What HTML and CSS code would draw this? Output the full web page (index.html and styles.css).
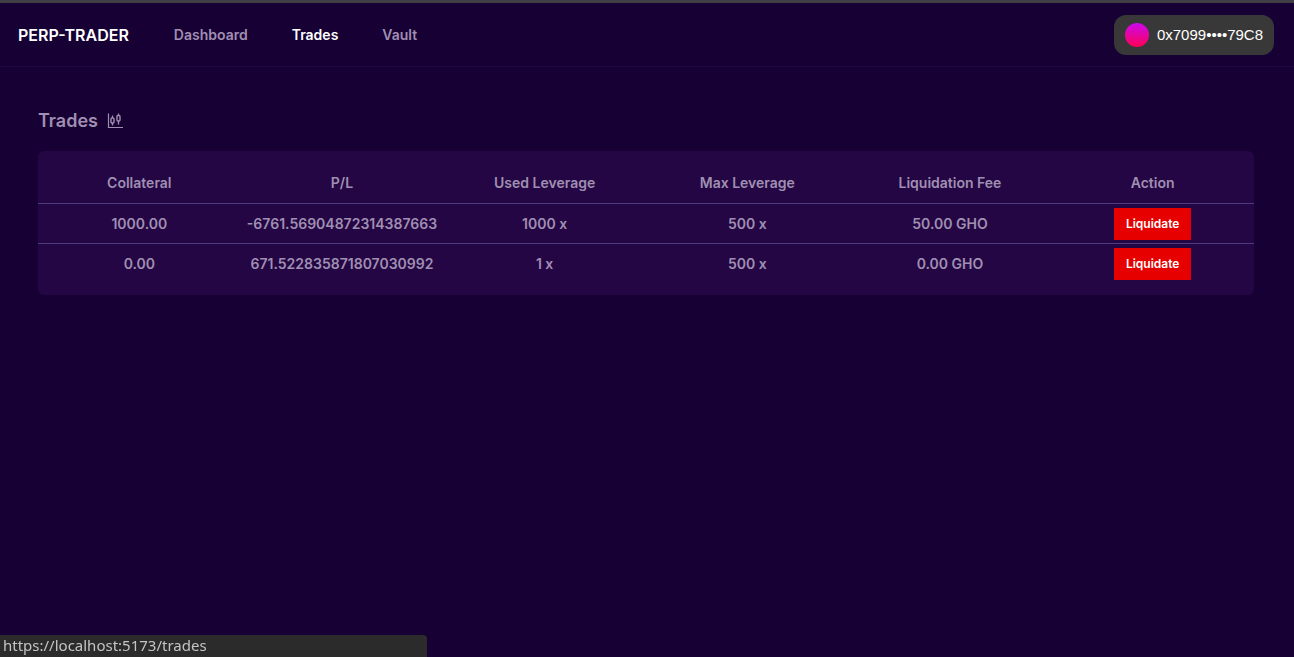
FILE: index.html
```html
<!DOCTYPE html>
<html lang="en">
<head>
<meta charset="utf-8">
<title>Perp-Trader</title>
<link rel="stylesheet" href="styles.css">
</head>
<body>
<header class="topbar">
  <a class="brand" href="#">PERP-TRADER</a>
  <nav class="nav">
    <a class="nav-link" href="#dashboard">Dashboard</a>
    <a class="nav-link active" href="#trades">Trades</a>
    <a class="nav-link" href="#vault">Vault</a>
  </nav>
  <button class="wallet" type="button"><span class="avatar"></span>0x7099••••79C8</button>
</header>
<main class="content">
  <h1 class="title">Trades
    <svg class="title-icon" viewBox="0 0 16 16" fill="none" stroke="currentColor" aria-hidden="true">
      <path d="M1.5 0.5V14.5H16" stroke-width="1.2"/>
      <path d="M5.5 2.5V5M5.5 10V12.5M11.5 0.5V3M11.5 8V11.5" stroke-width="1.3"/>
      <rect x="4" y="5" width="3" height="5" rx="1" stroke-width="1.4"/>
      <rect x="10" y="2.5" width="3" height="5.5" rx="1" stroke-width="1.4"/>
    </svg>
  </h1>
  <section class="panel">
    <table class="trades">
      <thead>
        <tr><th>Collateral</th><th>P/L</th><th>Used Leverage</th><th>Max Leverage</th><th>Liquidation Fee</th><th>Action</th></tr>
      </thead>
      <tbody>
        <tr><td>1000.00</td><td>-6761.56904872314387663</td><td>1000 x</td><td>500 x</td><td>50.00 GHO</td><td><button class="liquidate" type="button">Liquidate</button></td></tr>
        <tr><td>0.00</td><td>671.522835871807030992</td><td>1 x</td><td>500 x</td><td>0.00 GHO</td><td><button class="liquidate" type="button">Liquidate</button></td></tr>
      </tbody>
    </table>
  </section>
</main>
<div class="status">https://localhost:5173/trades</div>
</body>
</html>
```
FILE: styles.css
```css
* {
  box-sizing: border-box;
}

body {
  margin: 0;
  min-height: 100vh;
  border-top: 3px solid #413d44;
  background: #170033;
  color: #a08fb2;
  font-family: Inter, sans-serif;
  font-size: 14px;
  font-weight: 600;
}

a {
  color: inherit;
  text-decoration: none;
}

.topbar {
  display: flex;
  align-items: center;
  height: 64px;
  padding: 0 20px 0 18px;
  border-bottom: 1px solid #1f0a3f;
}

.brand {
  color: #fff;
  font-size: 16px;
}

.nav {
  display: flex;
  gap: 44px;
  margin-left: 45px;
}

.nav-link.active {
  color: #fff;
}

.wallet {
  display: flex;
  align-items: center;
  gap: 8px;
  height: 40px;
  margin-left: auto;
  padding: 0 11px;
  border: 0;
  border-radius: 12px;
  background: #383838;
  color: #fff;
  font: 15px "Liberation Sans", Arial, sans-serif;
}

.avatar {
  width: 24px;
  height: 24px;
  border-radius: 50%;
  background: linear-gradient(#cc08ee, #ff0055);
}

.content {
  padding: 42px 40px 0 38px;
}

.title {
  display: flex;
  align-items: center;
  gap: 9px;
  margin: 0 0 18px;
  font-size: 18px;
  font-weight: 600;
  line-height: 24px;
}

.title-icon {
  width: 16px;
  height: 16px;
}

.panel {
  padding: 12px 0;
  border-radius: 6px;
  background: #230643;
}

.trades {
  width: 100%;
  table-layout: fixed;
  border-collapse: separate;
  border-spacing: 0;
  text-align: center;
}

.trades th,
.trades td {
  height: 40px;
  padding: 0;
  font-weight: 600;
}

.trades th {
  padding-bottom: 2px;
}

.trades td {
  border-top: 1px solid #4e3b7e;
}

.liquidate {
  display: block;
  height: 32px;
  margin: 0 auto;
  padding: 0 12px;
  border: 0;
  background: #e60000;
  color: #fff;
  font: 600 12px Inter, sans-serif;
}

.status {
  position: fixed;
  bottom: 0;
  left: 0;
  width: 33%;
  padding: 0 3px 2px;
  border-top-right-radius: 4px;
  background: #2b2b2b;
  color: #c4c4c4;
  font: 15px/20px "Noto Sans", sans-serif;
}
```
